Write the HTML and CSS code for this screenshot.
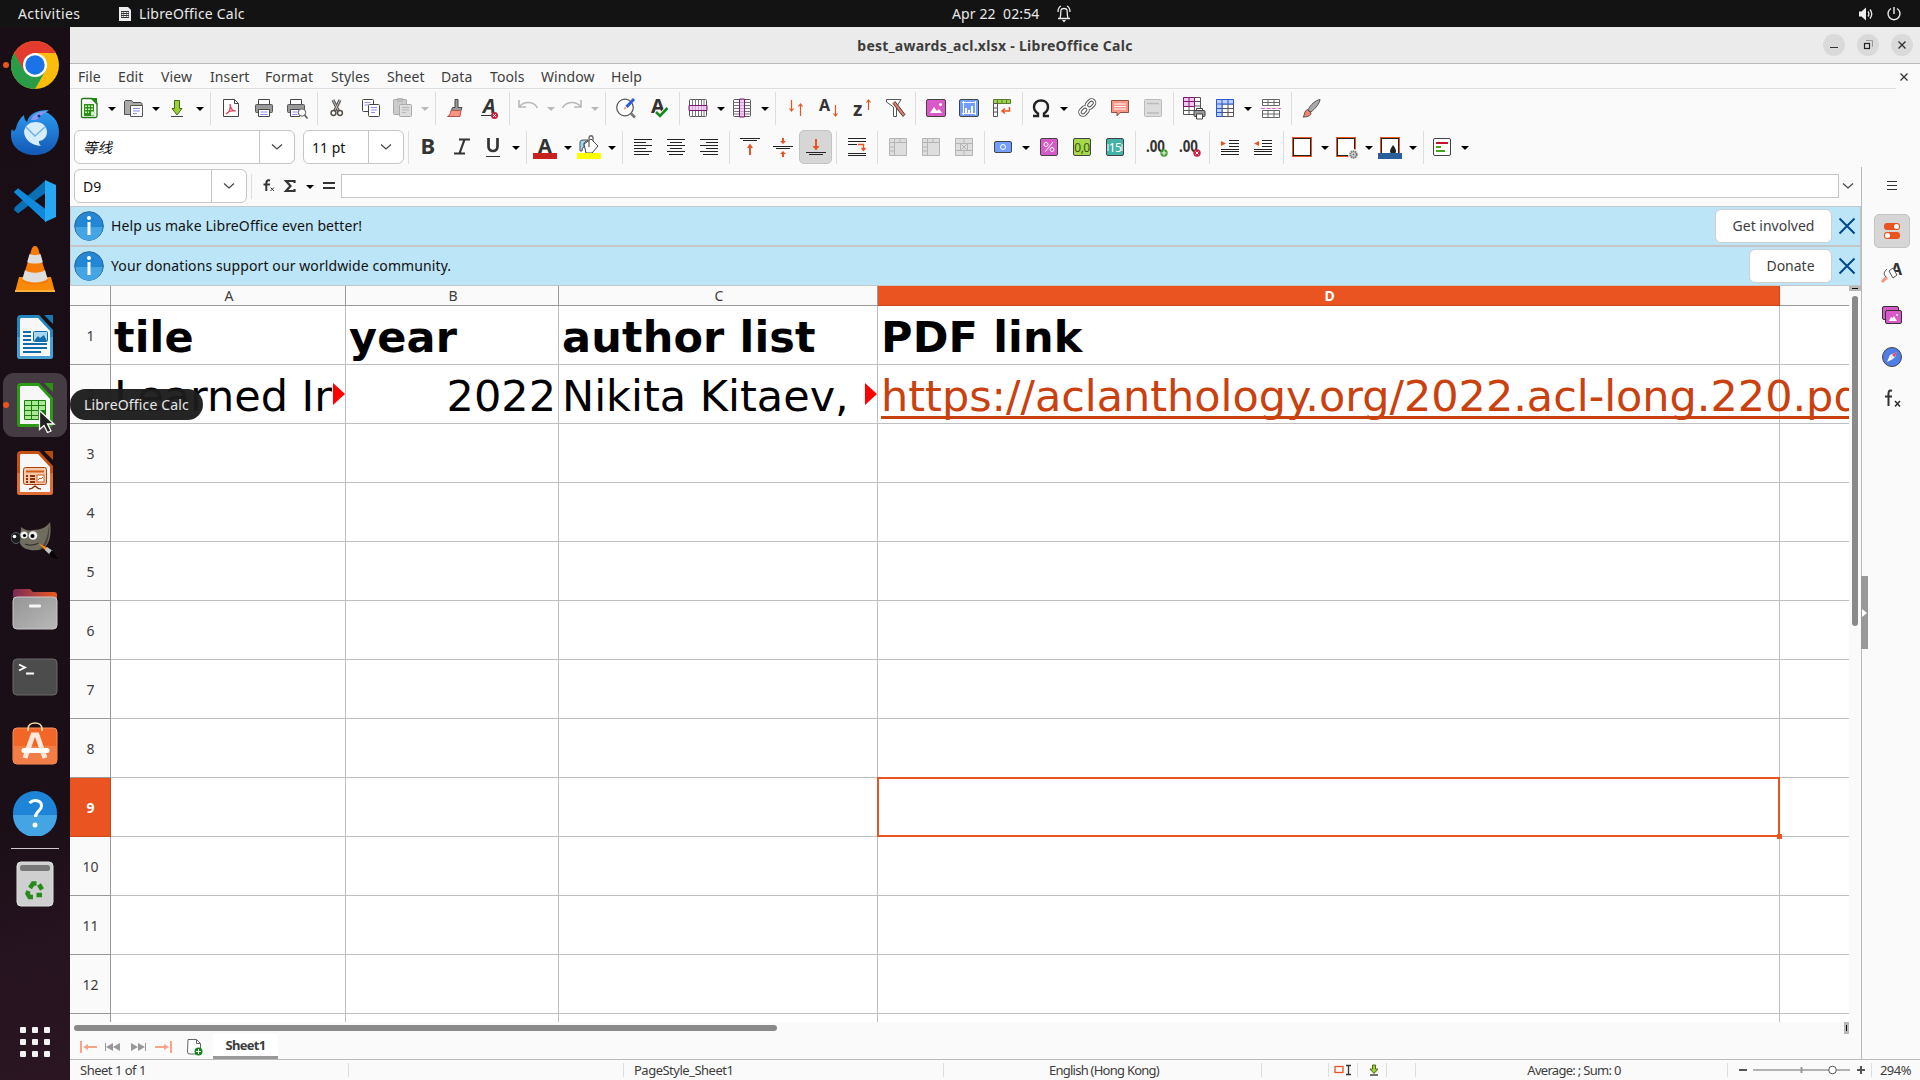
FILE: index.html
```html
<!DOCTYPE html>
<html lang="en">
<head>
    <meta charset="UTF-8">
    <title>best_awards_acl.xlsx - LibreOffice Calc</title>
    <link rel="stylesheet" href="styles.css">
</head>
<body>
    <div class="topbar">
        <span class="activities">Activities</span>
        <div class="app-name">
            <svg width="14" height="16" viewBox="0 0 14 16"><path d="M1 1h9l3 3v11H1z" fill="#eee"/><path d="M3 5h8v7H3z" fill="#333"/><path d="M3.5 6h2v1h-2zM6 6h2v1H6zM8.500 6h2v1h-2zM3.500 8h2v1h-2zM6 8h2v1H6zM8.500 8h2v1h-2zM3.500 10h2v1h-2zM6 10h2v1H6zM8.500 10h2v1h-2z" fill="#eee"/></svg>
            <span>LibreOffice Calc</span>
        </div>
        <div class="clock">
            <span>Apr 22&nbsp; 02:54</span>
            <svg width="14" height="18" viewBox="0 0 14 18" fill="none" stroke="#eee"><path d="M1 13.500h12M3 13c1-2 .5-6 1-8 .5-2 5.500-2 6 0 .5 2 0 6 1 8M1 7c0-3 1-5 3-6M13 7c0-3-1-5-3-6" stroke-width="1.300"/><path d="M5 15h4l-2 2.500z" fill="#eee" stroke="none"/></svg>
        </div>
        <div class="tray">
            <svg width="16" height="16" viewBox="0 0 16 16" fill="none" stroke="#eee"><path d="M1 5.500h2.500L8 1.500v13L3.500 10.500H1z" fill="#eee" stroke="none"/><path d="M10 5.500q1.800 2.500 0 5M12 3.500q3.500 4.500 0 9" stroke-width="1.300"/></svg>
            <svg width="16" height="16" viewBox="0 0 16 16" fill="none" stroke="#eee" stroke-width="1.400"><path d="M5 2.500a6 6 0 1 0 6 0M8 1v7"/></svg>
        </div>
    </div>

    <div class="desktop">
        <div class="dock">
            <div class="launcher running">
                <svg width="48" height="48" viewBox="0 0 48 48"><circle cx="24" cy="24" r="24" fill="#fbbc0c"/><path d="M24 24 3.200 12A24 24 0 0 1 44.800 12H24z" fill="#e33b2e"/><path d="M24 24 3.200 12A24 24 0 0 0 24 48l10.400-18z" fill="#2a9c47"/><path d="M3.200 12 13.600 30 24 12z" fill="#e33b2e"/><circle cx="24" cy="24" r="12" fill="#fff"/><circle cx="24" cy="24" r="9.700" fill="#1a73e8"/></svg>
            </div>
            <div class="launcher">
                <svg width="48" height="48" viewBox="0 0 48 48"><defs><linearGradient id="tb" x1="0" y1="0" x2="0" y2="1"><stop offset="0" stop-color="#2f9bf2"/><stop offset="1" stop-color="#1258b4"/></linearGradient></defs><path d="M1 20c1 3 3 2 4-1 1-5 4-10 8-13 0 3 1 5 3 7 2-8 9-12 22-12l-3 2c8 4 13 10 13 20 0 14-10 23-24 23S0 38 0 26c0-3 0-4 1-6z" fill="url(#tb)"/><path d="M20 11c2-6 8-9 17-9-5 2-8 5-10 8-2 1-5 1-7 1z" fill="#8d97f0"/><circle cx="28" cy="7" r="1.500" fill="#0b3d8c"/><path d="M13 23c1-7 6-10 12-10s11 4 11 10-5 9-8 9c0 2 0 3 2 5-9-1-16-5-17-14z" fill="#d7ecfd"/><path d="m15 18 9 9 10-9" fill="none" stroke="#6cb4f0" stroke-width="1.500"/></svg>
            </div>
            <div class="launcher">
                <svg width="44" height="44" viewBox="0 0 44 44"><path d="m1 13 4-3.500 28 21V43L2 14z" fill="#0a84d6"/><path d="m1 31 4 3.500 28-21V1L2 28z" fill="#0b6fb4"/><path d="M1 13 5 9.500 33 31v12z" fill="#1089dc"/><path d="m32 1 11 5v32l-11 5z" fill="#27a8f2"/></svg>
            </div>
            <div class="launcher">
                <svg width="42" height="48" viewBox="0 0 42 48"><path d="M5 32h32l4 15H1z" fill="#f88a08"/><path d="M1 45h40v2H1z" fill="#ffb13a"/><path d="m18 3 2-2h2l2 2 10 33c-4 5-22 5-26 0z" fill="#f57c00"/><path d="m15.500 9-2.300 8c3 2 12.600 2 15.600 0l-2.300-8c-3 1.500-8 1.500-11 0zM11 25l-2.500 9c5 4.500 20 4.500 25 0L31 25c-4 3.500-16 3.500-20 0z" fill="#dedede"/></svg>
            </div>
            <div class="launcher">
                <svg width="38" height="46" viewBox="0 0 38 46"><path d="M5 1h18l14 15v26a3 3 0 0 1-3 3H4a3 3 0 0 1-3-3V5a4 4 0 0 1 4-4z" fill="#2585bd"/><path d="M1 23h36v19a3 3 0 0 1-3 3H4a3 3 0 0 1-3-3z" fill="#46a0d2"/><path d="M5 4h17l12 13v25H4V5z" fill="#f7f7f7"/><path d="M28 1h9v9z" fill="#1b77b0"/><path d="M7 18h8M7 22h8M7 26h8M7 30h24M7 34h24M7 38h18" stroke="#0f6dab" stroke-width="2"/><rect x="17.500" y="17.500" width="14" height="10" rx="1" fill="#a9d6f0" stroke="#0f6dab"/><path d="m18 27 4-5 2 2 4-3 3 6z" fill="#0f6dab"/></svg>
            </div>
            <div class="launcher running active">
                <svg width="38" height="46" viewBox="0 0 38 46"><path d="M5 1h18l14 15v26a3 3 0 0 1-3 3H4a3 3 0 0 1-3-3V5a4 4 0 0 1 4-4z" fill="#2c9a17"/><path d="M5 4h17l12 13v25H4V5z" fill="#f7f7f7"/><path d="M28 1h9v9z" fill="#2c8f18"/><rect x="8" y="18" width="22" height="20" rx="1" fill="#1c7c0c"/><path d="M9 19h6v4H9zM16 19h6v4h-6zM23 19h6v4h-6zM9 24h6v4H9zM16 24h6v4h-6zM23 24h6v4h-6zM9 29h6v4H9zM16 29h6v4h-6zM9 34h6v3H9zM16 34h6v3h-6z" fill="#a7ea93"/></svg>
            </div>
            <div class="launcher">
                <svg width="38" height="46" viewBox="0 0 38 46"><path d="M5 1h18l14 15v26a3 3 0 0 1-3 3H4a3 3 0 0 1-3-3V5a4 4 0 0 1 4-4z" fill="#c5500f"/><path d="M1 23h36v19a3 3 0 0 1-3 3H4a3 3 0 0 1-3-3z" fill="#e06c36"/><path d="M5 4h17l12 13v25H4V5z" fill="#f7f7f7"/><path d="M28 1h9v9z" fill="#b84a0c"/><rect x="7.500" y="17.500" width="23" height="17" rx="2" fill="#f6c8ae" stroke="#a8430d"/><path d="M10 21.500h18" stroke="#d35a1a" stroke-width="2"/><path d="M10 26h2M10 29h2M10 32h2M14 26h5M14 29h5M14 32h5" stroke="#8c3407" stroke-width="2"/><rect x="21" y="25" width="7" height="7" fill="#fff" stroke="#d35a1a"/><path d="m22 30 2-2 1 1 2-2" fill="none" stroke="#d35a1a"/><path d="M13 39c3 0 4-1 6-3 2 2 3 3 6 3" fill="none" stroke="#8c3407" stroke-width="1.500"/></svg>
            </div>
            <div class="launcher">
                <svg width="48" height="40" viewBox="0 0 48 40"><path d="M10 6c4 3 7 4 12 3 8 0 14-3 17-8 2 14-1 27-12 28-8 1-16-1-18-7-1-6 1-10 1-16z" fill="#706c5f"/><path d="M38 3c1 14-2 24-10 26 6-5 9-14 10-26z" fill="#48463e"/><ellipse cx="5" cy="17" rx="5" ry="5.500" fill="#1b1b1b" stroke="#5a6165"/><circle cx="3.500" cy="15.500" r="1.800" fill="#fff"/><circle cx="13" cy="14" r="3.600" fill="#eee"/><circle cx="22" cy="14.500" r="4.300" fill="#eee"/><circle cx="13.500" cy="14.500" r="1.600"/><circle cx="21.500" cy="15" r="2"/><path d="M14 23c5 2 9 1 14-1" stroke="#222" fill="none"/><path d="m27 22 10 5-2 3z" fill="#f08a12"/><path d="m36 26 6 4-3 4-5-5z" fill="#c4c4c4"/><path d="m41 29 6 9c-5 0-7-2-9-5z" fill="#060606"/></svg>
            </div>
            <div class="launcher">
                <svg width="46" height="42" viewBox="0 0 46 42"><defs><linearGradient id="fo"><stop offset="0" stop-color="#7a2a58"/><stop offset="1" stop-color="#ec5a22"/></linearGradient><linearGradient id="fg" x1="0" y1="0" x2="1" y2="1"><stop offset="0" stop-color="#959595"/><stop offset="1" stop-color="#b8b8b8"/></linearGradient></defs><path d="M1 14V4a3 3 0 0 1 3-3h14l3 3h21a3 3 0 0 1 3 3v7z" fill="url(#fo)"/><rect x="1" y="9" width="44" height="32" rx="4" fill="url(#fg)" stroke="#c9c9c9"/><rect x="17" y="16.500" width="12" height="3" rx="1" fill="#f5f5f5"/></svg>
            </div>
            <div class="launcher">
                <svg width="46" height="38" viewBox="0 0 46 38"><rect x="1" y="1" width="44" height="36" rx="4" fill="#4c4c4c" stroke="#6a6a6a"/><path d="m7 6.500 6 3-6 3M14 15.500h8" stroke="#fff" stroke-width="1.800" fill="none"/></svg>
            </div>
            <div class="launcher store">
                <svg width="46" height="44" viewBox="0 0 46 44"><rect x="1" y="7" width="44" height="36" rx="4" fill="#f26628" stroke="#f8935f"/><path d="M1.500 25h43v14a4 4 0 0 1-4 4h-35a4 4 0 0 1-4-4z" fill="#f27d46"/><path d="M16 10V8c0-8 14-8 14 0v2" fill="none" stroke="#fbdca4" stroke-width="1.700"/><path d="M13 37 21 14h4l8 23" fill="none" stroke="#ffe9dc" stroke-width="5"/><path d="M12 29.500h23" stroke="#fff" stroke-width="5" stroke-linecap="round"/></svg>
            </div>
            <div class="launcher">
                <svg width="46" height="46" viewBox="0 0 46 46"><circle cx="23" cy="23" r="22" fill="#1d84d8"/><path d="M1 25h44a22 22 0 0 1-44 0z" fill="#45a4e4"/><path d="M17.500 13c4-4 12-3 12 3 0 5-6 5-6 11" fill="none" stroke="#fff" stroke-width="3"/><circle cx="23" cy="35" r="2.500" fill="#fff"/></svg>
            </div>
            <div class="dock-line"></div>
            <div class="launcher">
                <svg width="38" height="46" viewBox="0 0 38 46"><rect x="1" y="1" width="36" height="44" rx="4" fill="#cfcfcf" stroke="#e2e2e2"/><rect x="4" y="4" width="30" height="6" rx="2.500" fill="#777"/><g fill="none" stroke="#26891c" stroke-width="4.500"><path d="m14 27 3-4.500h3.500M23 23.500l3 5M26 34h-5.500M17 36h-3.500l-2-3.500 1-2.500"/></g></svg>
            </div>
            <div class="launcher apps">
                <svg width="30" height="30" viewBox="0 0 30 30" fill="#f2f2f2"><rect width="6" height="6" rx="1"/><rect x="12" width="6" height="6" rx="1"/><rect x="24" width="6" height="6" rx="1"/><rect y="12" width="6" height="6" rx="1"/><rect x="12" y="12" width="6" height="6" rx="1"/><rect x="24" y="12" width="6" height="6" rx="1"/><rect y="24" width="6" height="6" rx="1"/><rect x="12" y="24" width="6" height="6" rx="1"/><rect x="24" y="24" width="6" height="6" rx="1"/></svg>
            </div>
        </div>

        <div class="window">
            <div class="titlebar">
                <span class="title">best_awards_acl.xlsx - LibreOffice Calc</span>
                <div class="controls">
                    <span><svg width="12" height="12" viewBox="0 0 12 12"><path d="M2 8.500h8" stroke="#333"/></svg></span>
                    <span><svg width="12" height="12" viewBox="0 0 12 12" fill="none"><path d="M4 1.500h6.500V8" stroke="#999"/><rect x="2.500" y="4.500" width="5" height="5" stroke="#222" stroke-width="1.200"/></svg></span>
                    <span><svg width="12" height="12" viewBox="0 0 12 12"><path d="m2.500 2.500 7 7m0-7-7 7" stroke="#333" stroke-width="1.400"/></svg></span>
                </div>
            </div>
            <div class="menubar">
                <span>File</span><span>Edit</span><span>View</span><span>Insert</span><span>Format</span><span>Styles</span><span>Sheet</span><span>Data</span><span>Tools</span><span>Window</span><span>Help</span>
                <svg class="close-doc" width="10" height="10" viewBox="0 0 10 10"><path d="m1.500 1.500 7 7m0-7-7 7" stroke="#333" stroke-width="1.300"/></svg>
            </div>

            <!-- Standard toolbar -->
            <div class="toolbar">
                <div class="btn split"><svg viewBox="0 0 24 24"><path d="M4.500 4q0-1.500 1.500-1.500h9l5 4.500v13q0 1.500-1.500 1.500H6q-1.500 0-1.500-1.500z" fill="#fff" stroke="#1e7a12" stroke-width="1.300"/><path d="M13 2h7v7z" fill="#1e8a12"/><path d="M7 8h10v12H7z" fill="#2c8f18"/><path d="M8 9.500h2V11H8zm3 0h2V11h-2zm3 0h2V11h-2zM8 12.500h2V14H8zm3 0h2V14h-2zm3 0h2V14h-2zM8 15.500h2V17H8zm3 0h1V17h-1zm3 0h4v4h-4z" fill="#c9f2bf"/></svg><i></i></div>
                <div class="btn split"><svg viewBox="0 0 24 24"><path d="M3.500 18.500V5.500l1-1h6l1.500 2h8l1 1v11z" fill="#aaa" stroke="#4d4d4d"/><path d="M9.500 9.500h12v11h-12z" fill="#fff" stroke="#555"/><path d="M12 12.500h7M12 15h7M12 17.500h4" stroke="#8d8df0"/></svg><i></i></div>
                <div class="btn split"><svg viewBox="0 0 24 24"><path d="M9.500 4.500h5v8h2.500l-5 6.500-5-6.500h2.500z" fill="#9bcf3a" stroke="#4b6c17"/><path d="M6 20.500h12" stroke="#444"/></svg><i></i></div>
                <div class="sep"></div>
                <div class="btn"><svg viewBox="0 0 24 24"><path d="M4.500 3.500h11l4 4v13h-15z" fill="#fff" stroke="#444"/><path d="M15.500 3.500v4h4" fill="none" stroke="#444"/><path d="M7 18c3-1 5-5 4-10 1 5 2 7 6 7-4-1-7 0-10 3z" fill="none" stroke="#e0455d" stroke-width="1.200"/></svg></div>
                <div class="btn"><svg viewBox="0 0 24 24"><path d="M6.500 8V3.500h11V8" fill="#fff" stroke="#444"/><rect x="3.500" y="8.500" width="17" height="8" rx="1" fill="#999" stroke="#555"/><path d="M6.500 13.500h11v7h-11z" fill="#fff" stroke="#444"/><path d="M8.500 16h7M8.500 18.500h7" stroke="#8d8df0"/></svg></div>
                <div class="btn"><svg viewBox="0 0 24 24"><path d="M5.500 8V3.500h11V8" fill="#fff" stroke="#444"/><rect x="2.500" y="8.500" width="17" height="8" rx="1" fill="#999" stroke="#555"/><path d="M5.500 13.500h9v7h-9z" fill="#fff" stroke="#444"/><path d="M7.500 16h5M7.500 18.500h5" stroke="#8d8df0"/><circle cx="17" cy="16.500" r="3.700" fill="#fff" stroke="#555"/><path d="m19.500 19 3 3.500" stroke="#555" stroke-width="1.500"/></svg></div>
                <div class="sep"></div>
                <div class="btn cut"><svg viewBox="0 0 24 24"><path d="m8 4 5.500 11M15 4 9.500 15" stroke="#555" stroke-width="3"/><path d="m8 4 5.500 11M15 4 9.500 15" stroke="#c8c0b6"/><circle cx="8.500" cy="17" r="2.400" fill="#fff" stroke="#554f48" stroke-width="1.500"/><circle cx="15" cy="17" r="2.400" fill="#fff" stroke="#554f48" stroke-width="1.500"/></svg></div>
                <div class="btn"><svg viewBox="0 0 24 24"><rect x="3.500" y="3.500" width="11" height="12" rx="1" fill="#fff" stroke="#444"/><path d="M5.500 6.500h6M5.500 9h4" stroke="#8d8df0"/><rect x="9.500" y="8.500" width="11" height="12" rx="1" fill="#fff" stroke="#444"/><path d="M12 11.500h6M12 14h6M12 16.500h4" stroke="#8d8df0"/></svg></div>
                <div class="btn split off"><svg viewBox="0 0 24 24"><rect x="3.500" y="3.500" width="13" height="15" rx="1" fill="#ccc" stroke="#aaa"/><rect x="7" y="2" width="6" height="4" fill="#bbb"/><rect x="9.500" y="8.500" width="12" height="12" rx="1" fill="#dedede" stroke="#aaa"/><path d="M12 11.500h7M12 14h7M12 16.500h4" stroke="#b5b5b5"/></svg><i></i></div>
                <div class="sep"></div>
                <div class="btn"><svg viewBox="0 0 24 24"><path d="M11 3.500h3v8h4l-1 3H7.500l1-3H11z" fill="#999" stroke="#444"/><path d="M7 14.500h10l-1 6H3.500c2-1 3-3 3.500-6z" fill="#fc9483" stroke="#b3554a"/></svg></div>
                <div class="btn"><svg viewBox="0 0 24 24"><text x="6" y="17" class="glyph slant" font-size="20">A</text><path d="M4 19.500h10" stroke="#333"/><circle cx="17.500" cy="19.500" r="3.500" fill="#c9203e"/><path d="m16 18 3 3m0-3-3 3" stroke="#fff"/></svg></div>
                <div class="sep"></div>
                <div class="btn split off"><svg viewBox="0 0 24 24"><path d="M3 4v7h7M3.500 10.500C8 5 18 5 21.500 12" fill="none" stroke="#b9b9b9" stroke-width="1.600"/></svg><i></i></div>
                <div class="btn split off"><svg viewBox="0 0 24 24"><path d="M21 4v7h-7M20.500 10.500C16 5 6 5 2.500 12" fill="none" stroke="#b9b9b9" stroke-width="1.600"/></svg><i></i></div>
                <div class="sep"></div>
                <div class="btn"><svg viewBox="0 0 24 24"><circle cx="11" cy="11.500" r="8.300" fill="#fff" stroke="#555" stroke-width="1.200"/><path d="m17 17.500 4 4" stroke="#777" stroke-width="2.500"/><path d="m12.500 11 7.500-8" stroke="#2b5bdc" stroke-width="3"/><path d="m9.500 14 1.200-3.500 2 2z" fill="#f2a47c"/></svg></div>
                <div class="btn"><svg viewBox="0 0 24 24"><text x="4" y="17" class="glyph" font-size="20">A</text><path d="m8.500 15.500 4.500 4.500 8-8" fill="none" stroke="#fafafa" stroke-width="5"/><path d="m9 16 4 4 7.500-8" fill="none" stroke="#16871f" stroke-width="2.600"/></svg></div>
                <div class="sep"></div>
                <div class="btn split"><svg viewBox="0 0 24 24"><rect x="3.500" y="3.500" width="17" height="17" rx="1" fill="#fff" stroke="#555"/><path d="M6.500 3v18M9.500 3v18M12.500 3v18M15.500 3v18M18 3v18" stroke="#777"/><path d="M3 9.500h18v5H3z" fill="#f0b9ee" fill-opacity=".7" stroke="#7b1a72"/></svg><i></i></div>
                <div class="btn split"><svg viewBox="0 0 24 24"><rect x="3.500" y="3.500" width="17" height="17" rx="1" fill="#fff" stroke="#555"/><path d="M3 6.500h18M3 9.500h18M3 12.500h18M3 15.500h18M3 18h18" stroke="#777"/><path d="M9.500 3h5v18h-5z" fill="#f0b9ee" fill-opacity=".7" stroke="#7b1a72"/></svg><i></i></div>
                <div class="sep"></div>
                <div class="btn"><svg viewBox="0 0 24 24" fill="none" stroke="#e95420" stroke-width="1.200"><path d="M7.500 4v11M5.500 12.500l2 2.500 2-2.500M16.500 20V8M14.500 10.500l2-2.500 2 2.500"/></svg></div>
                <div class="btn"><svg viewBox="0 0 24 24"><text x="2" y="15" class="glyph" font-size="16">A</text><path d="M18.500 9v11M16.500 17.500l2 2.500 2-2.500" fill="none" stroke="#e95420" stroke-width="1.200"/></svg></div>
                <div class="btn"><svg viewBox="0 0 24 24"><text x="3" y="20" class="glyph" font-size="19">z</text><path d="M18.500 14V4M16.500 6.500l2-2.500 2 2.500" fill="none" stroke="#e95420" stroke-width="1.200"/></svg></div>
                <div class="btn"><svg viewBox="0 0 24 24"><path d="M3.500 3.500H18l-4.500 7.500v9.500h-3V11l-7-5z" fill="#fff" stroke="#555"/><path d="m10 7.500 2-2 10 13-2 2z" fill="#e8796a" stroke="#444"/></svg></div>
                <div class="sep"></div>
                <div class="btn"><svg viewBox="0 0 24 24"><rect x="2.500" y="3.500" width="19" height="17" rx="1.500" fill="#d959c8" stroke="#444"/><path d="m6 17 4-6 3 4 2-2 3 4z" fill="#fff"/><circle cx="16.500" cy="8.500" r="1.500" fill="#fff"/></svg></div>
                <div class="btn"><svg viewBox="0 0 24 24"><rect x="2.500" y="3.500" width="19" height="17" rx="1.500" fill="#729fff" stroke="#444"/><path d="M5 6.500h14M5 17.500h14M6.500 5v14M18.500 5v14" stroke="#fff"/><path d="M8 12h2v5H8zM11 14h2v3h-2zM14 10h2v7h-2z" fill="#fff"/></svg></div>
                <div class="btn"><svg viewBox="0 0 24 24"><path d="M3.500 3.500h17v4h-17z" fill="#9bd34b" stroke="#5c7a33"/><path d="M7.500 3v5M12 3v5M16.500 3v5" stroke="#5c7a33"/><path d="M3.500 7.500h4v13h-4zM3.500 12h4M3.500 16h4" fill="none" stroke="#555"/><path d="M19.500 11v4h-7M15 12.500 12 15l3 2.500" fill="none" stroke="#e95420" stroke-width="1.500"/></svg></div>
                <div class="sep"></div>
                <div class="btn split"><svg viewBox="0 0 24 24"><path d="M4 20h5v-2.500C6.500 16 5 14 5 11c0-4 3-6.500 7-6.500s7 2.500 7 6.500c0 3-1.500 5-4 6.500V20h5" fill="none" stroke="#222" stroke-width="2.400"/></svg><i></i></div>
                <div class="btn"><svg viewBox="0 0 24 24" fill="none" stroke="#555" stroke-width="3.400"><rect x="-4.500" y="-3" width="9" height="6" rx="3" transform="translate(15.500 8) rotate(-45)"/><rect x="-4.500" y="-3" width="9" height="6" rx="3" transform="translate(9 15) rotate(-45)"/><g stroke="#fff" stroke-width="1.400"><rect x="-4.500" y="-3" width="9" height="6" rx="3" transform="translate(15.500 8) rotate(-45)"/><rect x="-4.500" y="-3" width="9" height="6" rx="3" transform="translate(9 15) rotate(-45)"/></g></svg></div>
                <div class="btn"><svg viewBox="0 0 24 24"><path d="M3.500 4.500h17v12H12l-3 3.500v-3.500H3.500z" fill="#fc9483" stroke="#8c5148"/><path d="M6 8h12M6 10.500h12M6 13h12" stroke="#fff"/></svg></div>
                <div class="btn"><svg viewBox="0 0 24 24"><rect x="3.500" y="3.500" width="17" height="17" rx="1" fill="#dcdcdc" stroke="#bbb"/><path d="M6 7.500h12M6 17h12" stroke="#bbb" stroke-width="1.500"/></svg></div>
                <div class="sep"></div>
                <div class="btn"><svg viewBox="0 0 24 24"><path d="M1.500 1.500h17v17h-17zM1.500 5.500h17M1.500 10h17M1.500 14.500h17M7 1.500v17M12.500 1.500v17" fill="#fff" stroke="#555"/><path d="M1.500 1.500h11v9h-11zM1.500 5.500h11M7 1.500v9" fill="#f0c6ee" stroke="#7b1a72"/><rect x="12" y="14.500" width="11" height="6" rx="1" fill="#999" stroke="#444"/><path d="M14.500 12.500h6v2h-6zM14.500 18h6v5h-6z" fill="#fff" stroke="#444"/></svg></div>
                <div class="btn split"><svg viewBox="0 0 24 24"><path d="M3.500 3.500h17v17h-17zM3.500 8h17M3.500 12.500h17M3.500 16.500h17M9 3.500v17M15 3.500v17" fill="#fff" stroke="#555"/><path d="M3.500 3.500h17V8H9v12.500H3.500zM3.500 12.500H9M3.500 16.500H9M9 3.500V8M15 3.500V8M3.500 8H9" fill="#bcd0ff" stroke="#2a5bd0"/></svg><i></i></div>
                <div class="btn"><svg viewBox="0 0 24 24"><path d="M3.500 3.500h17v6h-17zM3.500 6.500h17M9 3.500v6M15 3.500v6M3.500 14.500h17v7h-17zM3.500 18h17M9 14.500v7M15 14.500v7" fill="#fff" stroke="#666"/><path d="M2 12.500h20" stroke="#e06cd0" stroke-dasharray="4 1.500"/></svg></div>
                <div class="sep"></div>
                <div class="btn"><svg viewBox="0 0 24 24"><path d="M8 14c2-5 8-10 12-10.500C20 7 15 13 11 16z" fill="#aaa" stroke="#555"/><path d="M7.500 13.500 11 17c0 3-4 4-8 4 2-2 1-6 4.500-7.500z" fill="#f0826e" stroke="#555"/></svg></div>
            </div>

            <!-- Formatting toolbar -->
            <div class="toolbar">
                <div class="combo font-name"><span class="cjk">等线</span><b><svg width="12" height="8" viewBox="0 0 12 8"><path d="m1 1.500 5 4.500 5-4.500"/></svg></b></div>
                <div class="combo font-size"><span>11 pt</span><b><svg width="12" height="8" viewBox="0 0 12 8"><path d="m1 1.500 5 4.500 5-4.500"/></svg></b></div>
                <div class="sep"></div>
                <div class="btn"><svg viewBox="0 0 24 24"><text x="3.500" y="19" class="glyph" font-size="22">B</text></svg></div>
                <div class="btn"><svg viewBox="0 0 24 24"><path d="M9 4.500h11M4 18.500h11M14.500 4.500l-5 14" fill="none" stroke="#333" stroke-width="2.200"/></svg></div>
                <div class="btn split"><svg viewBox="0 0 24 24"><path d="M7.500 3v8.500c0 6 9 6 9 0V3" fill="none" stroke="#333" stroke-width="2.700"/><path d="M5 21.500h14" stroke="#333"/></svg><i></i></div>
                <div class="sep"></div>
                <div class="btn split"><svg viewBox="0 0 24 24"><text x="5" y="18" class="glyph" font-size="20">A</text><path d="M0 18h24v6H0z" fill="#c9211e"/></svg><i></i></div>
                <div class="btn split"><svg viewBox="0 0 24 24"><path d="M3 16V7q0-2 3-2h5L7 8v4q-2 0-2 4z" fill="#9fd6f2" stroke="#555"/><path d="m7 9 7-5 7 7-6 7H9z" fill="#fff" stroke="#444"/><path d="M12 12V3c0-3 4-3 4 0v3" fill="none" stroke="#666" stroke-width="1.300"/><path d="M0 18h24v6H0z" fill="#ff0"/></svg><i></i></div>
                <div class="sep"></div>
                <div class="btn"><svg viewBox="0 0 24 24"><path d="M3 4.500h18M3 7.500h12M3 10.500h18M3 13.500h12M3 16.500h18M3 19.500h15" stroke="#222"/></svg></div>
                <div class="btn"><svg viewBox="0 0 24 24"><path d="M3 4.500h18M6 7.500h12M3 10.500h18M6 13.500h12M3 16.500h18M5 19.500h14" stroke="#222"/></svg></div>
                <div class="btn"><svg viewBox="0 0 24 24"><path d="M3 4.500h18M9 7.500h12M3 10.500h18M9 13.500h12M3 16.500h18M6 19.500h15" stroke="#222"/></svg></div>
                <div class="sep"></div>
                <div class="btn"><svg viewBox="0 0 24 24"><path d="M2 3.500h20M5 5.500h14" stroke="#222"/><path d="M11 20v-7H9l3-4.500 3 4.500h-2v7z" fill="#e95420"/></svg></div>
                <div class="btn"><svg viewBox="0 0 24 24"><path d="M2 11.500h20M5 13.500h14" stroke="#222"/><path d="M11 3h2v3h2l-3 3-3-3h2zM11 22h2v-3h2l-3-3-3 3h2z" fill="#e95420"/></svg></div>
                <div class="btn pressed"><svg viewBox="0 0 24 24"><path d="M2 17.500h20M5 19.500h14" stroke="#222"/><path d="M11 4h2v7h2.500L12 15.500 8.500 11H11z" fill="#e95420"/></svg></div>
                <div class="sep"></div>
                <div class="btn"><svg viewBox="0 0 24 24"><path d="M3 3.500h18M3 6.500h18M3 9.500h9M3 18.500h18M3 20.500h18" stroke="#222"/><path d="M13 9.500h5.500v5M16.500 13l2 2.500 2-2.500" fill="none" stroke="#e95420" stroke-width="1.400"/></svg></div>
                <div class="sep"></div>
                <div class="btn"><svg viewBox="0 0 24 24"><path d="M3.500 3.500h17v17h-17zM3.500 7.500h17M8.500 3.500v17M3.500 12h5M3.500 16h5M14 3.500v4" fill="#dedede" stroke="#b5b5b5"/></svg></div>
                <div class="btn"><svg viewBox="0 0 24 24"><path d="M3.500 3.500h17v17h-17zM3.500 7.500h17M8.500 3.500v17M3.500 12h5M3.500 16h5M14 3.500v4" fill="#dedede" stroke="#b5b5b5"/></svg></div>
                <div class="btn"><svg viewBox="0 0 24 24"><path d="M3.500 3.500h17v17h-17zM3.500 8.500h17M3.500 15.500h17M8.500 8.500v7M15.500 8.500v7M12 3.500v5M12 15.500v5" fill="#dedede" stroke="#b5b5b5"/><path d="m9.500 9.500 5 5m0-5-5 5" stroke="#b5b5b5"/></svg></div>
                <div class="sep"></div>
                <div class="btn split"><svg viewBox="0 0 24 24"><rect x="3.500" y="6.500" width="17" height="11" rx="1.500" fill="#729fff" stroke="#444"/><circle cx="12" cy="12" r="2.500" fill="none" stroke="#fff"/></svg><i></i></div>
                <div class="btn"><svg viewBox="0 0 24 24"><rect x="3.500" y="3.500" width="17" height="17" rx="1.500" fill="#d959c8" stroke="#444"/><circle cx="9" cy="9.500" r="2" fill="none" stroke="#fff"/><circle cx="15" cy="14.500" r="2" fill="none" stroke="#fff"/><path d="m8 17 8-10" stroke="#fff"/></svg></div>
                <div class="btn"><svg viewBox="0 0 24 24"><rect x="3.500" y="3.500" width="17" height="17" rx="1.500" fill="#a5d84a" stroke="#444"/><text x="12" y="16.500" class="num" font-size="12" fill="#3c5215">0,0</text></svg></div>
                <div class="btn"><svg viewBox="0 0 24 24"><rect x="3.500" y="3.500" width="17" height="17" rx="1.500" fill="#43b3a7" stroke="#444"/><text x="12" y="16.500" class="num" font-size="12" fill="#fff">15</text><path d="M5 9v7M19 9v7" stroke="#fff"/></svg></div>
                <div class="sep"></div>
                <div class="btn"><svg viewBox="0 0 24 24"><text x="2" y="17" class="glyph" font-size="16" textLength="19" lengthAdjust="spacingAndGlyphs">.00</text><circle cx="20" cy="18" r="3.700" fill="#3d9c2b"/><path d="M17.500 18h5M20 15.500v5" stroke="#fff"/></svg></div>
                <div class="btn"><svg viewBox="0 0 24 24"><text x="2" y="17" class="glyph" font-size="16" textLength="19" lengthAdjust="spacingAndGlyphs">.00</text><circle cx="20" cy="18" r="3.700" fill="#c9203e"/><path d="m18.500 16.500 3 3m0-3-3 3" stroke="#fff"/></svg></div>
                <div class="sep"></div>
                <div class="btn"><svg viewBox="0 0 24 24"><path d="M11 5.500h10M11 8.500h10M11 11.500h10M3 14.500h18M3 16.500h18M3 19.500h18" stroke="#222"/><path d="M3 6v5l5-2.500z" fill="#e95420"/></svg></div>
                <div class="btn"><svg viewBox="0 0 24 24"><path d="M11 5.500h10M11 8.500h10M11 11.500h10M3 14.500h18M3 16.500h18M3 19.500h18" stroke="#222"/><path d="M8 6v5L3 8.500z" fill="#e95420"/></svg></div>
                <div class="sep"></div>
                <div class="btn split"><svg viewBox="0 0 24 24"><rect x="2.500" y="2.500" width="19" height="19" fill="none" stroke="#e95420"/><rect x="3.500" y="3.500" width="17" height="17" fill="#fff" stroke="#222"/></svg><i></i></div>
                <div class="btn split"><svg viewBox="0 0 24 24"><rect x="2.500" y="2.500" width="19" height="19" fill="none" stroke="#e95420"/><rect x="3.500" y="3.500" width="17" height="17" fill="#fff" stroke="#222"/><circle cx="19.500" cy="19.500" r="5.500" fill="#fafafa"/><circle cx="19.500" cy="19.500" r="3.200" fill="#ddd" stroke="#777" stroke-width="2" stroke-dasharray="1.500 .5"/><circle cx="19.500" cy="19.500" r="1" fill="#777"/></svg><i></i></div>
                <div class="btn split"><svg viewBox="0 0 24 24"><rect x="2.500" y="2.500" width="19" height="19" fill="none" stroke="#e95420"/><rect x="3.500" y="3.500" width="17" height="17" fill="#fff" stroke="#222"/><path d="M15 10c3 4 3 5 3 6a3 3 0 0 1-6 0c0-1 1-3 3-6z" fill="#222"/><path d="M0 18h24v6H0z" fill="#2a6099"/></svg><i></i></div>
                <div class="sep"></div>
                <div class="btn split"><svg viewBox="0 0 24 24"><rect x="3.500" y="3.500" width="17" height="17" rx="1.500" fill="#fff" stroke="#444"/><path d="M6 8h12" stroke="#c9112e" stroke-width="2"/><path d="M6 12h5M6 16h9" stroke="#43a61c" stroke-width="2"/></svg><i></i></div>
            </div>

            <div class="workspace">
                <div class="main">
                    <div class="formulabar">
                        <div class="combo name-box"><span>D9</span><b><svg width="12" height="8" viewBox="0 0 12 8"><path d="m1 1.500 5 4.500 5-4.500"/></svg></b></div>
                        <div class="sep"></div>
                        <svg class="fx" width="14" height="18" viewBox="0 0 14 18" fill="none" stroke="#333"><path d="M8 3.500C4.500 2.500 4.300 5 4.300 7v7M1.500 7.500H8" stroke-width="2"/><path d="m8.500 10.500 3.500 3.500m0-3.500L8.500 14"/></svg>
                        <svg class="sum" width="14" height="16" viewBox="0 0 14 16" fill="none" stroke="#333" stroke-width="2.200"><path d="M11.500 5V3H3l4.500 5L3 13h8.500v-2"/></svg>
                        <i class="caret"></i>
                        <svg class="eq" width="14" height="10" viewBox="0 0 14 10"><path d="M1 2h12M1 7h12" stroke="#333" stroke-width="2"/></svg>
                        <div class="input"></div>
                        <svg class="expand" width="12" height="8" viewBox="0 0 12 8" fill="none" stroke="#444" stroke-width="1.200"><path d="m1 1.500 5 4.500 5-4.500"/></svg>
                    </div>
                    <div class="infobar">
                        <svg width="30" height="30" viewBox="0 0 30 30"><circle cx="15" cy="15" r="14.300" fill="#2387d6" stroke="#2c6493"/><path d="M1.500 16h27a13.500 13.500 0 0 1-27 0z" fill="#45a4e4"/><path d="M13.500 11h3v13h-3z" fill="#fff"/><circle cx="15" cy="7" r="2" fill="#fff"/></svg>
                        <span class="msg">Help us make LibreOffice even better!</span>
                        <button class="involved">Get involved</button>
                        <svg class="dismiss" width="18" height="18" viewBox="0 0 18 18"><path d="m1.500 1.500 15 15m0-15-15 15"/></svg>
                    </div>
                    <div class="infobar">
                        <svg width="30" height="30" viewBox="0 0 30 30"><circle cx="15" cy="15" r="14.300" fill="#2387d6" stroke="#2c6493"/><path d="M1.500 16h27a13.500 13.500 0 0 1-27 0z" fill="#45a4e4"/><path d="M13.500 11h3v13h-3z" fill="#fff"/><circle cx="15" cy="7" r="2" fill="#fff"/></svg>
                        <span class="msg">Your donations support our worldwide community.</span>
                        <button class="donate">Donate</button>
                        <svg class="dismiss" width="18" height="18" viewBox="0 0 18 18"><path d="m1.500 1.500 15 15m0-15-15 15"/></svg>
                    </div>
                    <div class="sheet-area">
                        <div class="sheet">
                            <div class="row head"><div></div><div>A</div><div>B</div><div>C</div><div class="sel">D</div><div></div></div>
                            <div class="row bold"><div>1</div><div>tile</div><div>year</div><div>author list</div><div>PDF link</div><div></div></div>
                            <div class="row"><div>2</div><div class="clip">Learned In<u></u></div><div class="number">2022</div><div class="clip">Nikita Kitaev, <u></u></div><div class="link">https://aclanthology.org/2022.acl-long.220.pdf</div><div></div></div>
                            <div class="row"><div>3</div><div></div><div></div><div></div><div></div><div></div></div>
                            <div class="row"><div>4</div><div></div><div></div><div></div><div></div><div></div></div>
                            <div class="row"><div>5</div><div></div><div></div><div></div><div></div><div></div></div>
                            <div class="row"><div>6</div><div></div><div></div><div></div><div></div><div></div></div>
                            <div class="row"><div>7</div><div></div><div></div><div></div><div></div><div></div></div>
                            <div class="row"><div>8</div><div></div><div></div><div></div><div></div><div></div></div>
                            <div class="row"><div class="sel">9</div><div></div><div></div><div></div><div class="cursor-cell"></div><div></div></div>
                            <div class="row"><div>10</div><div></div><div></div><div></div><div></div><div></div></div>
                            <div class="row"><div>11</div><div></div><div></div><div></div><div></div><div></div></div>
                            <div class="row"><div>12</div><div></div><div></div><div></div><div></div><div></div></div>
                            <div class="row"><div></div><div></div><div></div><div></div><div></div><div></div></div>
                        </div>
                        <div class="vscroll"><span class="splitter"></span><span class="thumb"></span></div>
                    </div>
                    <div class="hscroll"><span class="thumb"></span><span class="splitter"></span></div>
                    <div class="tabbar">
                        <svg width="92" height="14" viewBox="0 0 92 14"><path d="M1 1v12M17 7H5M91 1v12M75 7h12" stroke="#f7a48b" stroke-width="2" fill="none"/><path d="M3 7l5-3v6zM89 7l-5-3v6z" fill="#f7a48b"/><path d="M25.500 3v8M65.500 3v8" stroke="#999"/><path d="m26 7 7-4v8zM33 7l7-4v8zM51 3l7 4-7 4zM58 3l7 4-7 4z" fill="#999"/></svg>
                        <svg class="add" width="18" height="18" viewBox="0 0 18 18"><path d="M2 1.500h8.500l4 4V16H4q-2.500 0-2.500-2z" fill="#fff" stroke="#666"/><path d="M10.500 1.500v4h4" fill="none" stroke="#666"/><circle cx="12.500" cy="13.500" r="4" fill="#16871f"/><path d="M10 13.500h5M12.500 11v5" stroke="#fff"/></svg>
                        <span class="tab">Sheet1</span>
                    </div>
                </div>
                <div class="sidebar">
                    <div><svg width="12" height="12" viewBox="0 0 12 12"><path d="M1 1.500h10M1 5.500h10M1 9.500h10" stroke="#333"/></svg></div>
                    <div class="deck-active"><svg width="18" height="18" viewBox="0 0 18 18"><rect x="1" y="1" width="16" height="7" rx="3" fill="#e95420"/><rect x="1" y="10" width="16" height="7" rx="3" fill="#e95420"/><circle cx="13.500" cy="4.500" r="2.500" fill="#fff"/><circle cx="4.500" cy="13.500" r="2.500" fill="#fff"/></svg></div>
                    <div><svg width="24" height="24" viewBox="0 0 24 24"><text x="11" y="14" class="glyph" font-size="16">A</text><path d="m2 21 5-5" stroke="#fc9483" stroke-width="3"/><path d="M6 16c-3-3-2-5 1-8M9 10l4-3 4 7-4 3z" fill="#fff" stroke="#555"/></svg></div>
                    <div><svg width="24" height="24" viewBox="0 0 24 24"><rect x="2.500" y="3.500" width="16" height="13" rx="1.500" fill="#d959c8" stroke="#333"/><rect x="5.500" y="7.500" width="16" height="13" rx="1.500" fill="#d959c8" stroke="#333"/><path d="m9 18 2-4 2 1 1-2 3 5z" fill="#fff"/><circle cx="17" cy="12" r="1" fill="#fff"/></svg></div>
                    <div><svg width="24" height="24" viewBox="0 0 24 24"><circle cx="12" cy="12" r="9.500" fill="#4f7de8" stroke="#444"/><path d="m7 17 2.500-6L13 14z" fill="#fff"/><path d="M9 11c2-2 4-2 8-4-2 3-1 5-4 7z" fill="#eee"/><path d="m12 10 5-3.500-2.500 5.500z" fill="#e0455d"/></svg></div>
                    <div><svg width="24" height="24" viewBox="0 0 24 24" fill="none" stroke="#333"><path d="M12 3.800C8 2.500 8.500 6 8.500 8v11M5 9.500h7" stroke-width="2"/><path d="m15 14 5 5.500m0-5.500-5 5.500" stroke-width="1.600"/></svg></div>
                    <span class="handle"></span>
                </div>
            </div>

            <div class="statusbar">
                <span class="s-sheet">Sheet 1 of 1</span>
                <span class="s-blank"></span>
                <span class="s-style">PageStyle_Sheet1</span>
                <span class="s-lang">English (Hong Kong)</span>
                <span class="s-insert"></span>
                <span class="s-icon"><svg width="18" height="12" viewBox="0 0 18 12" fill="none"><rect x="1" y="2.500" width="8" height="6" stroke="#e95420" stroke-width="1.300"/><path d="M12 1.500h5M12 10.500h5M14.500 1.500v9" stroke="#333" stroke-width="1.300"/></svg></span>
                <span class="s-icon"><svg width="12" height="12" viewBox="0 0 12 12"><path d="M4.500 1h3v4H10L6 9.500 2 5h2.500z" fill="#9bcf3a" stroke="#4b6c17"/><path d="M2 11h8" stroke="#444" stroke-width="1.500"/></svg></span>
                <span class="s-icon"></span>
                <span class="s-sum">Average: ; Sum: 0</span>
                <span class="s-zoom"><svg width="132" height="14" viewBox="-3 0 132 14"><path d="M2 7h8M120 7h8M124 3v8" stroke="#555" stroke-width="2"/><path d="M16 7h97" stroke="#999" stroke-width="1.600"/><path d="M64.500 4v6" stroke="#999" stroke-width="2"/><circle cx="95.500" cy="7" r="3.800" fill="#fff" stroke="#555"/></svg></span>
                <span class="s-percent">294%</span>
            </div>
        </div>
    </div>

    <div class="tooltip">LibreOffice Calc</div>
    <svg class="pointer" width="18" height="26" viewBox="0 0 18 26"><path d="M1.500 1.500v19l4.500-4 3.500 7 3.500-1.500-3.500-7h6.500z" fill="#222" stroke="#fff" stroke-width="1.300"/></svg>
</body>
</html>
```
FILE: styles.css
```css
* {
    box-sizing: border-box;
}
body {
    margin: 0;
    width: 1920px;
    height: 1080px;
    overflow: hidden;
    font-family: "Noto Sans", "Open Sans", sans-serif;
    font-size: 14px;
    color: #3d3d3d;
    background: #fafafa;
}
svg {
    display: block;
    flex: none;
}

/* top panel */
.topbar {
    height: 27px;
    background: #131313;
    color: #e8e8e8;
    display: grid;
    grid-template-columns: 118px 834px 1fr auto;
    align-items: center;
    padding-right: 18px;
}
.activities {
    padding-left: 18px;
    letter-spacing: 0.4px;
}
.app-name, .clock, .tray {
    display: flex;
    align-items: center;
}
.app-name {
    gap: 7px;
    letter-spacing: 0.2px;
}
.clock {
    gap: 18px;
    letter-spacing: 0.1px;
}
.tray {
    gap: 12px;
}

.desktop {
    display: flex;
    height: 1053px;
}

/* dock */
.dock {
    width: 70px;
    padding: 4px 0;
    display: flex;
    flex-direction: column;
    background: linear-gradient(165deg, #190e15 0%, #1b0f17 75%, #25131f 86%, #2b1523 100%);
}
.launcher {
    position: relative;
    height: 68px;
    flex: none;
    display: flex;
    align-items: center;
    justify-content: center;
}
.running::before {
    content: "";
    position: absolute;
    left: 3px;
    top: 31px;
    width: 6px;
    height: 6px;
    border-radius: 50%;
    background: #e95420;
}
.active {
    height: 64px;
    margin: 2px 3px;
    border-radius: 11px;
    background: #453c43;
}
.active::before {
    left: 0;
    top: 29px;
}
.store {
    padding-bottom: 4px;
}
.dock-line {
    height: 1px;
    margin: 1px 11px;
    flex: none;
    background: #cfcbcd;
}
.apps {
    margin-top: auto;
}

/* window frame */
.window {
    width: 1850px;
    display: flex;
    flex-direction: column;
    background: #fafafa;
}
.titlebar {
    height: 37px;
    flex: none;
    display: grid;
    grid-template-columns: 1fr auto 1fr;
    align-items: center;
    background: #ebebeb;
    border-bottom: 1px solid #b9b9b9;
}
.title {
    grid-column: 2;
    font-weight: bold;
    font-size: 14px;
    letter-spacing: 0.28px;
}
.controls {
    display: flex;
    justify-content: flex-end;
    gap: 12px;
    padding-right: 7px;
}
.controls span {
    width: 22px;
    height: 22px;
    border-radius: 50%;
    background: #dadada;
    display: flex;
    align-items: center;
    justify-content: center;
}
.menubar {
    height: 25px;
    flex: none;
    display: flex;
    align-items: center;
    padding-left: 8px;
    letter-spacing: 0.1px;
    background: linear-gradient(#dedede, #dedede) 0 100% / 1826px 1px no-repeat;
}
.menubar span {
    width: 49px;
}
.menubar span:nth-child(1) { width: 40px; }
.menubar span:nth-child(2) { width: 43px; }
.menubar span:nth-child(4) { width: 55px; }
.menubar span:nth-child(5) { width: 66px; }
.menubar span:nth-child(6) { width: 56px; }
.menubar span:nth-child(7) { width: 54px; }
.menubar span:nth-child(10) { width: 70px; }
.menubar span:nth-child(9) { width: 51px; }
.close-doc {
    margin-left: auto;
    margin-right: 11px;
}

/* toolbars */
.toolbar {
    height: 39px;
    flex: none;
    display: flex;
    align-items: center;
    padding: 0 0 1px 4px;
}
.btn {
    width: 33px;
    height: 34px;
    padding-left: 5px;
    display: flex;
    align-items: center;
    flex: none;
}
.btn svg {
    width: 24px;
    height: 24px;
    overflow: visible;
}
.split {
    width: 44px;
    padding-left: 3px;
}
.btn i, .caret {
    border: 4px solid transparent;
    border-top-color: #000;
    border-bottom: 0;
    margin: 2px 0 0 7px;
    flex: none;
}
.off i {
    border-top-color: #b9b9b9;
}
.cut {
    padding-left: 4px;
}
.pressed {
    background: #d6d6d6;
    border: 1px solid #c4c4c4;
    border-radius: 5px;
    padding-left: 4px;
}
.sep {
    width: 1px;
    height: 33px;
    margin: 0 3px 0 4px;
    flex: none;
    background: #dedede;
}
.glyph {
    font-family: "Noto Sans", sans-serif;
    font-weight: bold;
    fill: #333;
}
.slant {
    font-style: italic;
}
.num {
    text-anchor: middle;
    letter-spacing: -0.5px;
}
.combo {
    height: 34px;
    display: flex;
    align-items: center;
    justify-content: space-between;
    flex: none;
    background: #fff;
    border: 1px solid #c6c6c6;
    border-radius: 6px;
    color: #111;
}
.combo span {
    padding-left: 8px;
}
.combo b {
    width: 35px;
    height: 32px;
    border-left: 1px solid #c6c6c6;
    display: flex;
    align-items: center;
    justify-content: center;
}
.combo svg {
    fill: none;
    stroke: #444;
    stroke-width: 1.2;
}
.font-name {
    width: 221px;
    margin-right: 8px;
}
.font-size {
    width: 101px;
}
.combo .cjk {
    font-family: "Noto Sans CJK SC", sans-serif;
    font-size: 14.5px;
    font-style: italic;
    padding: 0 0 2px 8px;
}

/* everything below the toolbars */
.workspace {
    height: 892px;
    flex: none;
    display: flex;
}
.main {
    width: 1791px;
    display: flex;
    flex-direction: column;
}
.formulabar {
    height: 39px;
    flex: none;
    display: flex;
    align-items: center;
    padding: 0 0 1px 4px;
}
.name-box {
    width: 173px;
}
.formulabar .sep {
    height: 25px;
}
.fx { margin-left: 7px; }
.sum { margin-left: 7px; }
.formulabar .caret { margin-left: 9px; }
.eq { margin-left: 8px; }
.input {
    width: 1498px;
    height: 24px;
    margin-left: 5px;
    background: #fff;
    border: 1px solid #c6c6c6;
}
.expand {
    margin-left: 3px;
}
.infobar {
    height: 40px;
    flex: none;
    display: flex;
    align-items: center;
    padding: 0 4px 0 3px;
    background: #bce5f7;
    border: 1px solid #c6c6c6;
    color: #111;
}
.msg {
    margin: 0 auto 0 7px;
    padding-bottom: 1px;
    letter-spacing: 0.1px;
}
.infobar button {
    height: 34px;
    font: inherit;
    color: #3d3d3d;
    background: #fff;
    border: 1px solid #cfcfcf;
    border-radius: 6px;
    padding: 0 0 1px;
}
.involved { width: 117px; }
.donate { width: 83px; }
.dismiss {
    margin-left: 6px;
    stroke: #03488c;
    stroke-width: 2;
}

/* grid */
.sheet-area {
    height: 736px;
    flex: none;
    display: flex;
}
.sheet {
    width: 1779px;
    overflow: hidden;
    background: #fff;
}
.row {
    display: grid;
    grid-template-columns: 41px 235px 213px 319px 902px 69px;
    height: 59px;
}
.row > div {
    position: relative;
    display: flex;
    align-items: flex-end;
    border-right: 1px solid #bfbfbf;
    border-bottom: 1px solid #bfbfbf;
    padding: 0 3px 2px;
    font-family: "DejaVu Sans", sans-serif;
    font-size: 43px;
    line-height: 50px;
    white-space: nowrap;
    color: #000;
}
.row > div:last-child {
    border-right: 0;
}
.row > div:first-child, .head > div {
    align-items: center;
    justify-content: center;
    padding: 2px 0 0 1px;
    background: #fafafa;
    border-color: #999;
    font-family: "Noto Sans", sans-serif;
    font-size: 14px;
    line-height: 18px;
    color: #3d3d3d;
}
.row.head {
    height: 20px;
}
.row.head > div {
    padding-top: 0;
    padding-left: 2px;
}
.bold > div:not(:first-child) {
    font-weight: bold;
    letter-spacing: 0.15px;
}
.row > .sel:nth-child(n) {
    background: #e95420;
    border-color: #c8481b;
    color: #fff;
    font-weight: bold;
}
.row > .number {
    justify-content: flex-end;
    padding-right: 2px;
}
.row > .clip {
    overflow: hidden;
}
/* overflow marker at the right edge of a cell */
.clip u {
    position: absolute;
    right: 0;
    top: 0;
    width: 13px;
    height: 58px;
    background: #fff;
}
.clip u::after {
    content: "";
    position: absolute;
    left: 1px;
    top: 18px;
    border: 11px solid transparent;
    border-left: 12px solid #f00;
    border-right: 0;
}
.row > .link {
    color: #c9410f;
    z-index: 1;
    letter-spacing: -0.03px;
    text-decoration: underline 3px;
    text-underline-offset: 5px;
    text-decoration-skip-ink: none;
}
.cursor-cell::before {
    content: "";
    position: absolute;
    inset: -1px;
    border: 2px solid #e95420;
}
.cursor-cell::after {
    content: "";
    position: absolute;
    right: -3px;
    bottom: -3px;
    width: 5px;
    height: 5px;
    z-index: 1;
    background: #e95420;
}
.vscroll {
    width: 12px;
    display: flex;
    flex-direction: column;
    align-items: center;
}
.vscroll .splitter {
    width: 12px;
    height: 5px;
    background: linear-gradient(#000, #000) center / 6px 1px no-repeat #b9b9b9;
}
.vscroll .thumb {
    width: 6px;
    height: 330px;
    margin-top: 5px;
    border-radius: 3px;
    background: #8a8a8a;
}
.hscroll {
    height: 12px;
    flex: none;
    display: flex;
    align-items: center;
    justify-content: space-between;
    padding: 0 12px 0 4px;
}
.hscroll .thumb {
    width: 703px;
    height: 6px;
    border-radius: 3px;
    background: #8a8a8a;
}
.hscroll .splitter {
    width: 5px;
    height: 12px;
    background: linear-gradient(#000, #000) center / 1px 6px no-repeat #b9b9b9;
}
.tabbar {
    height: 25px;
    flex: none;
    display: flex;
    align-items: center;
    padding-left: 10px;
}
.add {
    margin-left: 14px;
}
.tab {
    width: 65px;
    height: 25px;
    margin-left: 9px;
    line-height: 22px;
    text-align: center;
    font-weight: bold;
    font-size: 13px;
    letter-spacing: -0.7px;
    background: #fff;
    border-bottom: 3px solid #999;
}

/* sidebar */
.sidebar {
    position: relative;
    width: 59px;
    border-left: 1px solid #b9b9b9;
    padding: 2px 0 0 1px;
    display: flex;
    flex-direction: column;
    align-items: center;
    gap: 8px;
}
.sidebar div {
    width: 36px;
    height: 34px;
    display: flex;
    align-items: center;
    justify-content: center;
}
.sidebar .deck-active {
    margin-top: 3px;
    background: #d6d6d6;
    border: 1px solid #c4c4c4;
    border-radius: 5px;
}
.handle {
    position: absolute;
    left: -1px;
    top: 409px;
    width: 7px;
    height: 73px;
    background: #999;
}
.handle::after {
    content: "";
    position: absolute;
    left: 1px;
    top: 33px;
    border: 4px solid transparent;
    border-left: 5px solid #fff;
    border-right: 0;
}

/* status bar */
.statusbar {
    height: 21px;
    flex: none;
    display: flex;
    align-items: center;
    border-top: 1px solid #b9b9b9;
    font-size: 13px;
    letter-spacing: -0.5px;
}
.statusbar span {
    height: 14px;
    line-height: 14px;
    border-right: 1px solid #dedede;
    display: flex;
    align-items: center;
    justify-content: center;
    white-space: nowrap;
    flex: none;
}
.statusbar .s-sheet {
    width: 279px;
    padding-left: 10px;
    justify-content: flex-start;
}
.s-blank { width: 275px; }
.statusbar .s-style {
    width: 320px;
    padding-left: 10px;
    justify-content: flex-start;
}
.s-lang {
    width: 318px;
    padding-left: 3px;
    letter-spacing: -0.75px;
}
.s-insert { width: 67px; }
.s-icon { width: 29px; }
.s-icon + .s-icon { padding-left: 3px; }
.s-sum {
    width: 312px;
    padding-left: 5px;
    letter-spacing: -0.7px;
}
.s-zoom { width: 144px; }
.statusbar .s-percent {
    width: 47px;
    border: 0;
}

/* floating on top of the desktop */
.tooltip {
    position: absolute;
    left: 70px;
    top: 389px;
    width: 133px;
    height: 31px;
    line-height: 31px;
    text-align: center;
    border-radius: 16px;
    background: rgba(28, 28, 28, 0.96);
    color: #e8e8e8;
    letter-spacing: 0.15px;
}
.pointer {
    position: absolute;
    left: 38px;
    top: 409px;
}
```
